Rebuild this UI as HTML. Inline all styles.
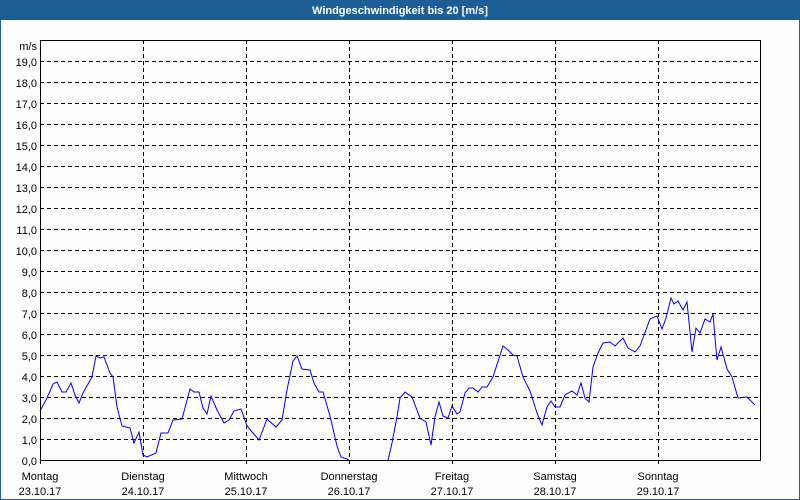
<!DOCTYPE html>
<html><head><meta charset="utf-8"><style>
html,body{margin:0;padding:0;background:#fcfdfc;}
svg{display:block;}
text{font-family:"Liberation Sans",sans-serif;font-size:11px;fill:#000;}
</style></head><body>
<svg width="800" height="500" viewBox="0 0 800 500" xmlns="http://www.w3.org/2000/svg">
<rect x="0" y="0" width="800" height="500" fill="#fcfdfc"/>
<rect x="0" y="0" width="800" height="20" fill="#1c5f96"/>
<rect x="0" y="20" width="1" height="480" fill="#1c5f96"/>
<rect x="799" y="20" width="1" height="480" fill="#1c5f96"/>
<rect x="0" y="499" width="800" height="1" fill="#1c5f96"/>
<text x="400" y="14" text-anchor="middle" style="fill:#fff;font-weight:bold;font-size:11px">Windgeschwindigkeit bis 20 [m/s]</text>
<g stroke="#000" stroke-width="1" stroke-dasharray="4,3" fill="none" shape-rendering="crispEdges">
<path d="M40 61.5H760M40 82.5H760M40 103.5H760M40 124.5H760M40 145.5H760M40 166.5H760M40 187.5H760M40 208.5H760M40 229.5H760M40 250.5H760M40 271.5H760M40 292.5H760M40 313.5H760M40 334.5H760M40 355.5H760M40 376.5H760M40 397.5H760M40 418.5H760M40 439.5H760"/>
<path d="M143.5 40V460M246.5 40V460M349.5 40V460M452.5 40V460M555.5 40V460M658.5 40V460"/>
</g>
<polyline fill="none" stroke="#0000ee" stroke-width="1" points="40,411 47,398 53,384 57,382 62,392 66,392 71,383 75,395 79,403 83,393 92,377 96,356 100,358 104,357 110,373 113,377 117,407 122,426 130,428 134,443 139,432 143,455 147,457 156,453 161,433 168,433 173,420 182,419 190,389 194,392 199,392 203,408 207,414 211,396 217,410 224,423 229,420 234,411 241,409 247,426 253,433 259,440 267,419 276,427 282,420 287,390 293,361 297,356 302,369 310,370 314,383 319,392 323,392 330,416 337,446 341,457 347,459 349,460.5 388,460.5 392,443 397,417 400,398 405,392 412,397 420,418 426,422 431,445 435,417 439,402 443,416 448,418 452,406 457,414 460,412 465,393 469,388 473,388 478,392 482,387 487,387 493,377 503,346 508,350 513,355 517,356 523,377 530,391 537,413 542,425 547,407 551,401 555,407 560,407 565,395 572,391 577,395 581,383 585,398 589,402 593,367 598,353 603,343 610,342 615,346 623,338 628,348 635,352 640,346 650,319 657,316 662,329 666,318 671,298 674,304 678,301 683,310 687,302 692,352 696,328 700,333 705,319 710,322 713,314 717,360 721,347 727,369 732,377 738,398 747,397 755,405"/>
<rect x="40.5" y="40.5" width="720" height="420" fill="none" stroke="#000" stroke-width="1" shape-rendering="crispEdges"/>
<g stroke="#000" shape-rendering="crispEdges"><path d="M40.5 460V464M143.5 460V464M246.5 460V464M349.5 460V464M452.5 460V464M555.5 460V464M658.5 460V464"/></g>
<g text-anchor="end">
<text x="37" y="50">m/s</text>
<text x="37" y="66">19,0</text><text x="37" y="87">18,0</text><text x="37" y="108">17,0</text><text x="37" y="129">16,0</text><text x="37" y="150">15,0</text><text x="37" y="171">14,0</text><text x="37" y="192">13,0</text><text x="37" y="213">12,0</text><text x="37" y="234">11,0</text><text x="37" y="255">10,0</text><text x="37" y="276">9,0</text><text x="37" y="297">8,0</text><text x="37" y="318">7,0</text><text x="37" y="339">6,0</text><text x="37" y="360">5,0</text><text x="37" y="381">4,0</text><text x="37" y="402">3,0</text><text x="37" y="423">2,0</text><text x="37" y="444">1,0</text><text x="37" y="465">0,0</text>
</g>
<g text-anchor="middle">
<text x="40" y="480">Montag</text><text x="40" y="495">23.10.17</text>
<text x="143" y="480">Dienstag</text><text x="143" y="495">24.10.17</text>
<text x="246" y="480">Mittwoch</text><text x="246" y="495">25.10.17</text>
<text x="349" y="480">Donnerstag</text><text x="349" y="495">26.10.17</text>
<text x="452" y="480">Freitag</text><text x="452" y="495">27.10.17</text>
<text x="555" y="480">Samstag</text><text x="555" y="495">28.10.17</text>
<text x="658" y="480">Sonntag</text><text x="658" y="495">29.10.17</text>
</g>
</svg>
</body></html>
